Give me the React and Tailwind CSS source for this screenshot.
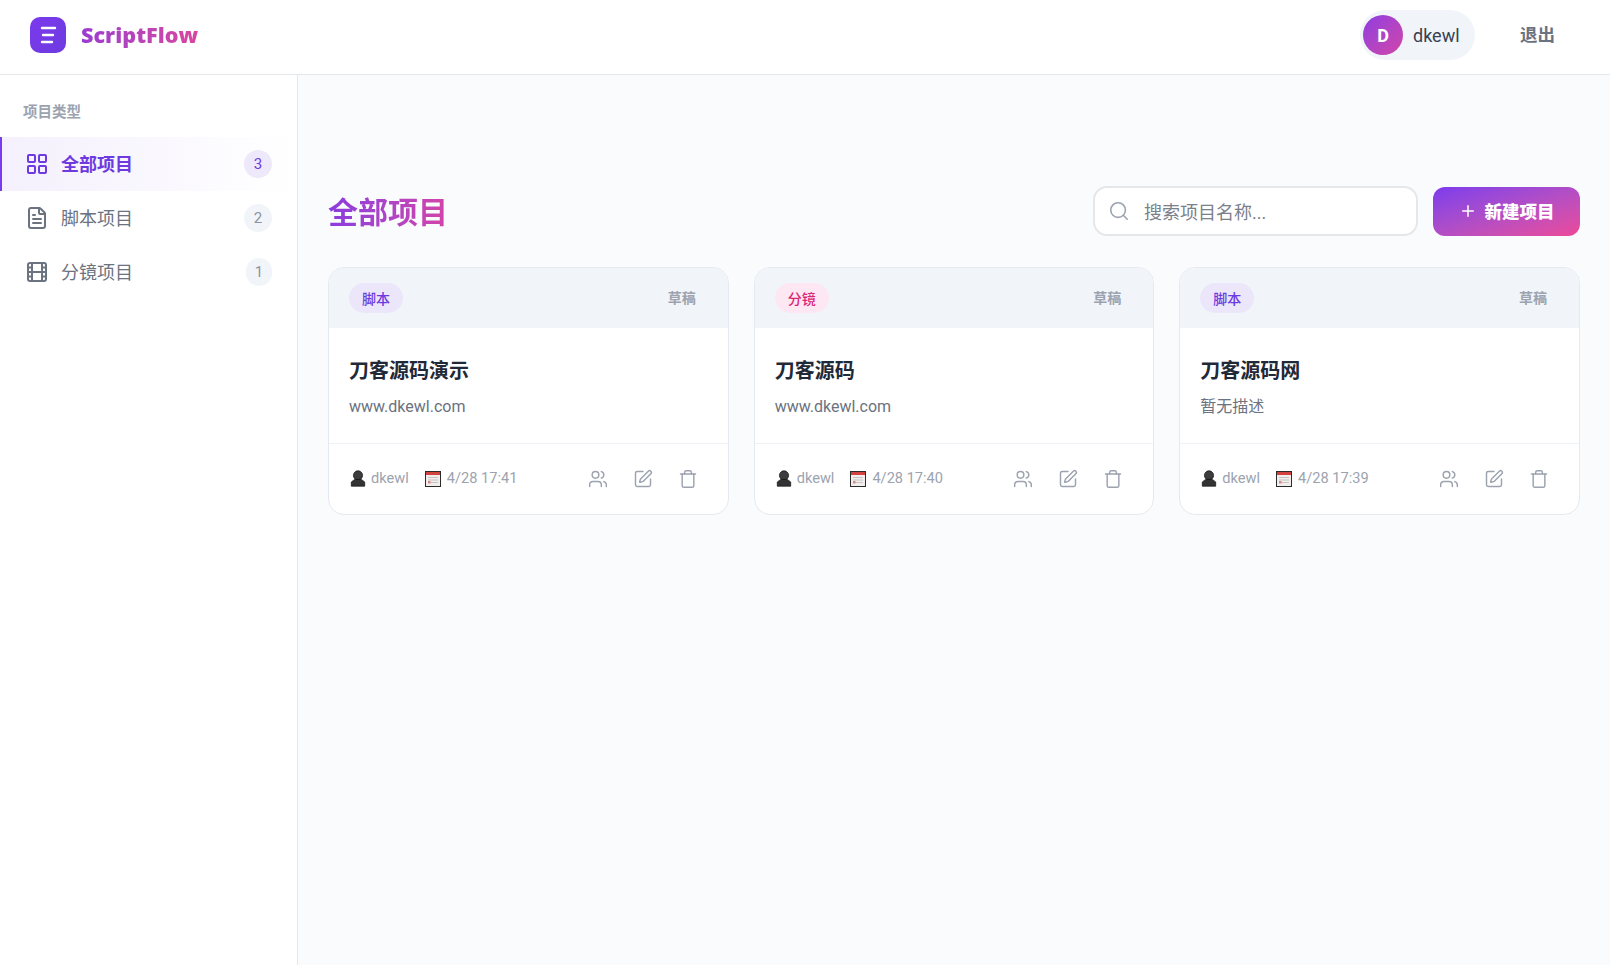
import React from "react";
import { LayoutGrid, FileText, Film, Users, SquarePen, Trash, Search, Plus } from "lucide-react";

const font = "font-['Roboto','Noto_Sans_CJK_SC',sans-serif]";

function PersonGlyph() {
  return (
    <svg width="16" height="17" viewBox="0 0 16 17" className="shrink-0">
      <circle cx="8" cy="5.4" r="4.6" fill="#3d3d3d" stroke="#111" strokeWidth="0.7" />
      <path d="M4.6 9.4h6.8l3.3 2.6v4.2H1.3v-4.2z" fill="#333" stroke="#111" strokeWidth="0.7" strokeLinejoin="round" />
    </svg>
  );
}

function CalendarGlyph() {
  return (
    <svg width="16" height="16" viewBox="0 0 16 16" className="shrink-0">
      <rect x="0.5" y="0.5" width="15" height="15" fill="#f3eeee" stroke="#2b2b2b" />
      <rect x="1" y="1" width="14" height="3" fill="#d0433f" />
      <path d="M3 6.5h10M3 9h10M3 11.5h10" stroke="#c9c4c4" strokeWidth="1" />
      <rect x="3" y="10" width="2.5" height="2.5" fill="#d98a8a" />
    </svg>
  );
}

function Side({ icon: Icon, label, count, active }) {
  return (
    <div
      className={
        "flex h-[54px] items-center justify-between border-l-2 pl-[23px] pr-[25px] " +
        (active
          ? "border-[#7c3aed] bg-gradient-to-r from-[#f4f0fd] to-white text-[#6d3adf]"
          : "border-transparent text-[#6b7280]")
      }
    >
      <div className="flex items-center gap-[12px]">
        <Icon size={24} strokeWidth={2} />
        <span className={"pt-px text-[18px] " + (active ? "font-bold" : "")}>{label}</span>
      </div>
      <span
        className={
          "flex h-[28px] items-center justify-center rounded-full pt-px text-[15px] " +
          (count === "1" ? "w-[26px] " : "w-[28px] ") +
          (active ? "bg-[#ede9fb] text-[#6d3adf]" : "bg-[#f1f5f9] text-[#8b93a0]")
        }
      >
        {count}
      </span>
    </div>
  );
}

function Card({ tag, pink, title, desc, time }) {
  return (
    <div className="overflow-hidden rounded-[16px] border border-[#e5e9f0] bg-white">
      <div className="flex h-[60px] items-center justify-between bg-[#f1f5f9] pl-[20px] pr-[32px]">
        <span
          className={
            "flex h-[30px] w-[54px] items-center justify-center rounded-full pt-[2px] text-[14px] font-medium " +
            (pink ? "bg-[#fce7f3] text-[#db2777]" : "bg-[#ebe6fa] text-[#6d3adf]")
          }
        >
          {tag}
        </span>
        <span className="pt-px text-[14px] font-semibold text-[#9ca3af]">草稿</span>
      </div>
      <div className="h-[115px] px-[20px] pt-[28px]">
        <div className="text-[20px] leading-[30px] font-bold text-[#1f2937]">{title}</div>
        <div className="mt-[9px] text-[16px] leading-[24px] text-[#6b7280]">{desc}</div>
      </div>
      <div className="flex h-[71px] items-center justify-between border-t border-[#eef1f5] pl-[21px] pr-[30px]">
        <div className="flex items-center text-[14.6px] text-[#9ca3af]">
          <PersonGlyph />
          <span className="ml-[5px]">dkewl</span>
          <span className="ml-[16px] flex items-center gap-[6px]">
            <CalendarGlyph />
            {time}
          </span>
        </div>
        <div className="flex items-center gap-[25px] text-[#9ca3af]">
          <Users size={20} strokeWidth={1.75} />
          <SquarePen size={20} strokeWidth={1.75} />
          <Trash size={20} strokeWidth={1.75} />
        </div>
      </div>
    </div>
  );
}

export default function App() {
  return (
    <div className={"flex h-[965px] w-full flex-col overflow-hidden bg-white " + font}>
      <header className="flex h-[75px] shrink-0 items-center justify-between border-b border-[#e5e7eb] bg-white pb-[4px] pl-[30px] pr-[55px]">
        <div className="flex items-center gap-[15px]">
          <div className="flex h-[36px] w-[36px] items-center justify-center rounded-[10px] bg-gradient-to-br from-[#7c3aed] to-[#6d3adf]">
            <svg width="36" height="36" viewBox="0 0 36 36" fill="none" stroke="white" strokeWidth="2.4" strokeLinecap="round">
              <path d="M12 11h13M13 18h10M12 25h10" />
            </svg>
          </div>
          <span className="bg-gradient-to-r from-[#9b3bd0] to-[#d9459f] bg-clip-text font-['Open_Sans',sans-serif] text-[21.6px] font-extrabold text-transparent">ScriptFlow</span>
        </div>
        <div className="flex items-center gap-[45px]">
          <div className="flex h-[50px] w-[115px] items-center gap-[10px] rounded-full bg-[#f1f5f9] pl-[3px]">
            <div className="flex h-[40px] w-[40px] items-center justify-center rounded-full bg-gradient-to-br from-[#8f3ae0] to-[#d342a8] text-[18px] font-bold text-white">D</div>
            <span className="text-[18px] text-[#374151]">dkewl</span>
          </div>
          <span className="pt-px text-[17.5px] font-semibold text-[#6b7280]">退出</span>
        </div>
      </header>
      <div className="flex min-h-0 flex-1">
        <aside className="w-[298px] shrink-0 border-r border-[#e5e7eb] bg-white">
          <div className="flex h-[62px] items-center pl-[23px] pt-[14px] text-[14.5px] font-semibold text-[#9ca3af]">项目类型</div>
          <Side icon={LayoutGrid} label="全部项目" count="3" active />
          <Side icon={FileText} label="脚本项目" count="2" />
          <Side icon={Film} label="分镜项目" count="1" />
        </aside>
        <main className="min-w-0 flex-1 bg-[#fafbfc] pl-[30px] pr-[30px] pt-[111px]">
          <div className="flex h-[50px] items-center justify-between">
            <h1 className="bg-gradient-to-r from-[#8a3ae0] to-[#d342a8] bg-clip-text pt-[2px] text-[30px] font-bold text-transparent">全部项目</h1>
            <div className="flex items-center gap-[15px]">
              <div className="flex h-[50px] w-[325px] items-center rounded-[14px] border-2 border-[#e5e7eb] bg-white pl-[13px]">
                <Search size={22} strokeWidth={1.75} className="text-[#9ca3af]" />
                <span className="ml-[14px] pt-[3px] text-[18px] text-[#7b8089]">搜索项目名称...</span>
              </div>
              <div className="flex h-[49px] w-[147px] items-center justify-center gap-[8px] rounded-[12px] bg-gradient-to-br from-[#7c3aed] to-[#ec4899] text-[17.5px] font-extrabold text-white">
                <Plus size={18} strokeWidth={2} />
                <span className="pt-[2px]">新建项目</span>
              </div>
            </div>
          </div>
          <div className="mt-[31px] grid grid-cols-3 gap-[25px]">
            <Card tag="脚本" title="刀客源码演示" desc="www.dkewl.com" time="4/28 17:41" />
            <Card tag="分镜" pink title="刀客源码" desc="www.dkewl.com" time="4/28 17:40" />
            <Card tag="脚本" title="刀客源码网" desc="暂无描述" time="4/28 17:39" />
          </div>
        </main>
      </div>
    </div>
  );
}
